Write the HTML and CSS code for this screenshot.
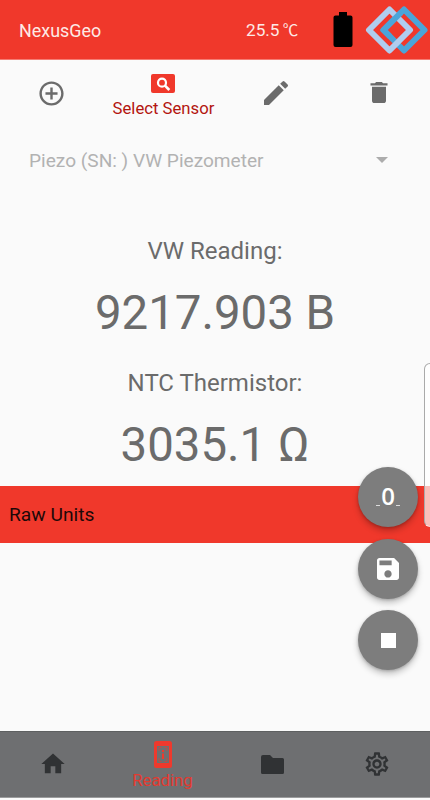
FILE: index.html
```html
<!DOCTYPE html>
<html lang="en">
<head>
<meta charset="utf-8">
<title>NexusGeo</title>
<link rel="stylesheet" href="styles.css">
</head>
<body>
<div class="app">
  <header class="header">
    <span class="brand">NexusGeo</span>
    <span class="temp">25.5 <span class="unit">℃</span></span>
    <svg class="battery" viewBox="0 0 20 36"><path d="M6 0h8v3.500h3.500A2 2 0 0 1 19.500 5.500V33a2 2 0 0 1-2 2H2.500a2 2 0 0 1-2-2V5.500a2 2 0 0 1 2-2H6z"/></svg>
    <svg class="logo" viewBox="0 0 64 50" fill="none" stroke-width="6" stroke-linejoin="round">
      <path stroke="#4ba5d9" d="M39 4.500 59.500 25 39 45.500 18.500 25z"/>
      <path stroke="#b0cdef" d="M24.500 4.500 45 25 24.500 45.500 4 25z"/>
      <path stroke="#4ba5d9" d="M36 7.500 18.500 25 25 31.500"/>
    </svg>
  </header>
  <nav class="tools">
    <div class="tool"><svg class="i-add" viewBox="0 0 24 24"><path d="M13 7h-2v4H7v2h4v4h2v-4h4v-2h-4V7zm-1-5C6.480 2 2 6.480 2 12s4.480 10 10 10 10-4.480 10-10S17.520 2 12 2zm0 18c-4.410 0-8-3.590-8-8s3.590-8 8-8 8 3.590 8 8-3.590 8-8 8z"/></svg></div>
    <div class="tool tool-select">
      <svg class="i-search" viewBox="0 0 24 19"><rect width="24" height="19" rx="2" fill="#f0382b"/><circle cx="11" cy="8.700" r="4" fill="none" stroke="#fff" stroke-width="2.200"/><path d="m14 11.700 4.300 4.300" stroke="#fff" stroke-width="2.600"/></svg>
      <span>Select Sensor</span>
    </div>
    <div class="tool"><svg class="i-edit" viewBox="0 0 24 24"><path d="M3 17.250V21h3.750L17.810 9.940l-3.750-3.750L3 17.250zM20.710 7.040a1 1 0 0 0 0-1.410l-2.340-2.340a1 1 0 0 0-1.410 0l-1.830 1.830 3.750 3.750 1.830-1.830z"/></svg></div>
    <div class="tool"><svg class="i-trash" viewBox="0 0 24 24"><path d="M6 19c0 1.100.9 2 2 2h8c1.100 0 2-.9 2-2V7H6v12zM19.300 4h-3.800l-1-1h-5l-1 1H4.700v2h14.600V4z"/></svg></div>
  </nav>
  <div class="sensor"><span>Piezo (SN: ) VW Piezometer</span><svg viewBox="0 0 12 6"><path d="M0 0h12L6 6z"/></svg></div>
  <main class="readings">
    <h2 class="label">VW Reading:</h2>
    <p class="value">9217.903 B</p>
    <h2 class="label label-ntc">NTC Thermistor:</h2>
    <p class="value">3035.1 Ω</p>
  </main>
  <div class="units"><span>Raw Units</span></div>
  <div class="space"></div>
  <footer class="nav">
    <div class="tab"><svg class="i-home" viewBox="0 0 24 24"><path d="M10 20v-6h4v6h5v-8h3L12 3 2 12h3v8z"/></svg></div>
    <div class="tab tab-active">
      <svg class="i-phone" viewBox="0 0 18 27"><rect width="18" height="27" rx="2.500"/><path fill="#6e6f71" d="M3 5h12v17H3z"/><path fill="none" stroke="#ef392d" stroke-opacity=".6" d="M5 10V6.500h2.500M10.500 6.500H13V10M13 17v3.500h-2.500M7.500 20.500H5V17"/><path d="M8 9h2v2H8zm0 3.500h2V18H8z"/></svg>
      <span>Reading</span>
    </div>
    <div class="tab"><svg class="i-folder" viewBox="0 0 24 20"><path d="M2 0h7l3 3h9.500A1.500 1.500 0 0 1 23 4.500v13a1.500 1.500 0 0 1-1.500 1.500h-20A1.500 1.500 0 0 1 0 17.500V2a2 2 0 0 1 2-2z"/></svg></div>
    <div class="tab"><svg class="i-gear" viewBox="0 0 24 24"><path d="M19.430 12.980c.04-.32.07-.64.07-.98 0-.34-.03-.66-.07-.98l2.110-1.650c.19-.15.240-.42.12-.64l-2-3.460c-.09-.16-.26-.25-.44-.25-.06 0-.12.010-.17.030l-2.490 1c-.52-.4-1.080-.73-1.690-.98l-.38-2.650C14.460 2.180 14.250 2 14 2h-4c-.25 0-.46.180-.49.420l-.38 2.650c-.61.250-1.170.590-1.690.980l-2.490-1c-.06-.02-.12-.03-.18-.03-.17 0-.34.090-.43.250l-2 3.460c-.13.220-.07.490.12.640l2.110 1.650c-.04.320-.07.650-.07.980 0 .33.030.66.070.98l-2.110 1.650c-.19.150-.24.420-.12.640l2 3.460c.09.160.26.250.44.250.06 0 .12-.01.170-.03l2.490-1c.52.400 1.080.730 1.690.980l.38 2.650c.03.240.24.420.49.420h4c.25 0 .46-.18.490-.42l.38-2.650c.61-.25 1.170-.59 1.690-.98l2.490 1c.06.020.12.030.18.030.17 0 .34-.09.430-.25l2-3.460c.12-.22.070-.49-.12-.64l-2.110-1.650zm-1.980-1.710c.04.310.05.520.05.730 0 .21-.02.430-.05.730l-.14 1.130.89.700 1.080.840-.7 1.210-1.270-.51-1.040-.42-.9.680c-.43.320-.84.560-1.250.730l-1.060.43-.16 1.130-.2 1.350h-1.400l-.19-1.350-.16-1.130-1.060-.43c-.43-.18-.83-.41-1.230-.71l-.91-.7-1.060.43-1.270.51-.7-1.210 1.080-.84.890-.7-.14-1.130c-.03-.31-.05-.54-.05-.74s.02-.43.050-.73l.14-1.130-.89-.7-1.080-.84.700-1.210 1.270.51 1.040.42.900-.68c.43-.32.840-.56 1.250-.73l1.060-.43.160-1.130.2-1.350h1.390l.19 1.350.16 1.130 1.060.43c.43.180.83.410 1.230.71l.91.700 1.060-.43 1.270-.51.700 1.210-1.070.85-.89.700.14 1.130zM12 8c-2.210 0-4 1.790-4 4s1.790 4 4 4 4-1.790 4-4-1.790-4-4-4zm0 6c-1.100 0-2-.9-2-2s.9-2 2-2 2 .9 2 2-.9 2-2 2z"/></svg></div>
  </footer>
  <div class="fabs">
    <div class="fab zero"><i></i><span>0</span><i></i></div>
    <div class="fab"><svg viewBox="3 3 18 18"><path d="M17 3H5c-1.110 0-2 .9-2 2v14c0 1.100.890 2 2 2h14c1.100 0 2-.9 2-2V7l-4-4zm-5 16c-1.660 0-3-1.340-3-3s1.340-3 3-3 3 1.340 3 3-1.340 3-3 3zm3-10H5V5h10v4z"/></svg></div>
    <div class="fab"><b></b></div>
  </div>
  <div class="edge"></div>
</div>
</body>
</html>
```

FILE: styles.css
```css
* { box-sizing: border-box; margin: 0; }
body { background: #fafafa; font-family: Roboto, "Noto Sans CJK SC", sans-serif; }
svg { display: block; flex: none; }
.app {
  position: relative;
  width: 430px;
  height: 800px;
  overflow: hidden;
  display: flex;
  flex-direction: column;
  color: #6b6b6b;
}
.header {
  height: 60px;
  flex: none;
  display: flex;
  align-items: center;
  padding: 0 1px 0 19px;
  background: #f0382b;
  border-bottom: 1px solid #f57c73;
  color: #fdeae6;
}
.brand { width: 227px; font-size: 17.9px; line-height: 24px; padding-top: 2px; }
.temp { width: 87px; font-size: 17.2px; line-height: 24px; padding-top: 1px; white-space: nowrap; }
.unit { font-size: 15.5px; margin-left: -1px; }
.battery { width: 20px; height: 36px; fill: #000; }
.logo { width: 64px; height: 50px; margin-left: 12px; }
.tools { height: 70px; flex: none; display: grid; grid-template-columns: 103px 121px 104px 102px; fill: #6b6b6b; }
.tool { display: flex; flex-direction: column; align-items: center; }
.i-add { width: 29px; height: 29px; margin-top: 19px; }
.tool-select { color: #b3150f; font-size: 16.7px; line-height: 20px; white-space: nowrap; }
.i-search { width: 24px; height: 19px; margin: 14px 1px 6px 0; }
.i-edit { width: 32px; height: 32px; margin-top: 17px; }
.i-trash { width: 28px; height: 29px; margin: 18px 1px 0 0; }
.sensor {
  height: 61px;
  flex: none;
  display: flex;
  align-items: center;
  justify-content: space-between;
  padding: 0 42px 1px 29px;
  color: #b2b2b2;
  fill: #acacac;
  font-size: 19.1px;
}
.sensor svg { width: 12px; height: 6px; }
.readings { height: 295px; flex: none; padding-top: 44px; text-align: center; }
.label { font-size: 24px; font-weight: 400; line-height: 32px; }
.value { font-size: 47.4px; line-height: 56px; margin-top: 18px; }
.label-ntc { margin-top: 26px; }
.units { height: 57px; flex: none; display: flex; align-items: center; padding-left: 9px; background: #f0382b; color: #1d0808; font-size: 19.2px; }
.space { height: 188px; flex: none; }
.nav { height: 67px; flex: none; display: grid; grid-template-columns: 105px 115px 104px 106px; background: #6e6f71; border-top: 1px solid #5e6061; border-bottom: 1px solid #9b9c9d; fill: #303234; }
.tab { display: flex; flex-direction: column; align-items: center; }
.tab-active { color: #e33a30; fill: #ef392d; font-size: 16.8px; line-height: 20px; }
.i-home { width: 28px; height: 28px; margin-top: 18px; }
.i-phone { width: 18px; height: 27px; margin: 9px 0 2px; }
.i-folder { width: 24px; height: 20px; margin: 23px 0 0 1px; }
.i-gear { width: 28px; height: 28px; margin-top: 18px; }
.fabs { position: absolute; right: 12px; top: 467px; display: flex; flex-direction: column; gap: 11.5px; }
.fab {
  width: 60px;
  height: 60px;
  border-radius: 50%;
  background: #7d7d7d;
  color: #fff;
  fill: #fff;
  display: flex;
  align-items: center;
  justify-content: center;
  box-shadow: 0 4px 6px rgba(0, 0, 0, .22), 0 1px 3px rgba(0, 0, 0, .2);
}
.fab svg { width: 22px; height: 22px; }
.fab b { width: 15px; height: 15px; background: #fff; }
.zero { font-family: "Open Sans", sans-serif; font-size: 24px; font-weight: 600; }
.zero i { width: 4px; height: 1px; margin-top: 17px; background: #ddd; }
.zero span { margin: -3px 1px 0; }
.edge { position: absolute; left: 424px; top: 363px; width: 12px; height: 164px; border: 1px solid #aaa; border-bottom-color: #ffffff80; border-radius: 6px; background: rgba(255, 255, 255, .68); }
```
